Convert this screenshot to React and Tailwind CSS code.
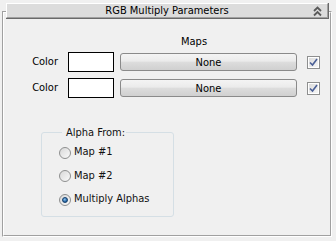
import { useState } from 'react';

const font = { fontFamily: '"DejaVu Sans Condensed", Tahoma, "Liberation Sans", sans-serif' };

function Chevrons() {
  return (
    <svg width="9" height="11" viewBox="0 0 9 11">
      <path d="M1 5 L4.5 1.5 L8 5" fill="none" stroke="#5a5a5a" strokeWidth="1.8" />
      <path d="M1 9.5 L4.5 6 L8 9.5" fill="none" stroke="#5a5a5a" strokeWidth="1.8" />
    </svg>
  );
}

function CheckBox({ checked }) {
  return (
    <div className="w-[13px] h-[13px] border border-[#8e8f8f] bg-white p-[1px]">
      <div className="w-full h-full bg-gradient-to-br from-[#dcdcdc] to-[#f6f6f6] flex items-center justify-center">
        {checked && (
          <svg width="9" height="9" viewBox="0 0 9 9">
            <path d="M1 4.5 L3.5 7 L8 1" fill="none" stroke="#4a5f96" strokeWidth="1.6" />
          </svg>
        )}
      </div>
    </div>
  );
}

function Radio({ checked, label, onClick }) {
  return (
    <div className="flex items-center h-[13px] cursor-default" onClick={onClick}>
      <div className="w-[12px] h-[12px] rounded-full border border-[#8e8f8f] bg-gradient-to-br from-[#d8d8d8] to-[#fafafa] flex items-center justify-center">
        {checked && <div className="w-[6px] h-[6px] rounded-full bg-[radial-gradient(circle_at_40%_35%,#8cc3f0,#1f5f9e_70%)] border border-[#153f6b]" />}
      </div>
      <span className="ml-[3px] text-[11px] text-[#111]">{label}</span>
    </div>
  );
}

function MapRow() {
  return (
    <div className="flex items-center h-[20px]">
      <div className="w-[54px] text-right text-[11px] text-black">Color</div>
      <div className="ml-[10px] w-[46px] h-[20px] border border-black bg-white" />
      <button className="ml-[6px] w-[177px] h-[18px] rounded-[3px] border border-[#8a8a8a] bg-[linear-gradient(#f4f4f4,#ebebeb_45%,#dddddd_50%,#d0d0d0)] text-[11px] text-black leading-none">
        None
      </button>
      <div className="ml-[10px]"><CheckBox checked /></div>
    </div>
  );
}

export default function App() {
  const [alpha, setAlpha] = useState(2);
  const opts = ['Map #1', 'Map #2', 'Multiply Alphas'];

  return (
    <div className="w-[336px] h-[241px] bg-[#f0f0f0] pt-[3px] overflow-hidden" style={font}>
      {/* title bar */}
      <div className="relative z-10 ml-[6px] w-[323px] h-[16px] border-b border-r border-[#696969]">
        <div className="h-full border-t border-l border-white border-b border-r border-b-[#a0a0a0] border-r-[#a0a0a0] bg-[#dcdcdc] flex items-center relative">
          <div className="flex-1 text-center text-[11px] text-black leading-none">RGB Multiply Parameters</div>
          <div className="absolute right-[5px] top-[2px]"><Chevrons /></div>
        </div>
      </div>

      {/* rollout panel */}
      <div className="-mt-[8px] ml-[2px] w-[330px] h-[226px] border-t border-l border-[#a0a0a0] border-b border-r border-b-white border-r-white">
        <div className="h-full border-t border-l border-white border-b border-r border-b-[#a0a0a0] border-r-[#a0a0a0]">
          <div className="pt-[22px] pl-[177px] text-[11px] leading-[13px] text-black">Maps</div>
          <div className="mt-[4px] flex flex-col gap-[6px]">
            <MapRow />
            <MapRow />
          </div>

          <fieldset className="mt-[28px] ml-[37px] w-[133px] h-[91px] border border-[#d5dfe5] rounded-[3px] pl-[17px]">
            <legend className="ml-[3px] pl-[4px] pr-[1px] text-[11px] leading-[13px] text-[#111]">Alpha From:</legend>
            <div className="mt-[7px] flex flex-col gap-[10.5px]">
              {opts.map((o, i) => (
                <Radio key={o} label={o} checked={alpha === i} onClick={() => setAlpha(i)} />
              ))}
            </div>
          </fieldset>
        </div>
      </div>
    </div>
  );
}
